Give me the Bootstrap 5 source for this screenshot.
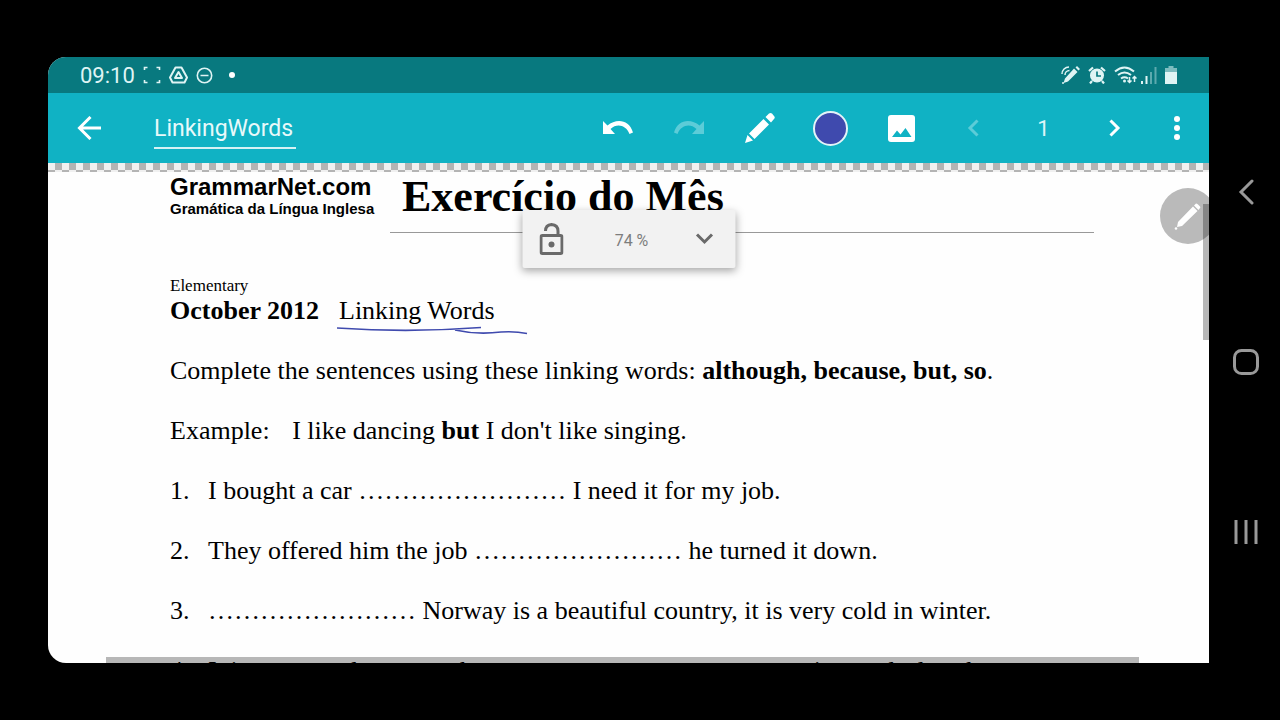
<!DOCTYPE html>
<html lang="pt">
<head>
<meta charset="utf-8">
<meta name="viewport" content="width=device-width, initial-scale=1">
<title>LinkingWords</title>
<link href="https://cdn.jsdelivr.net/npm/bootstrap@5.3.0/dist/css/bootstrap.min.css" rel="stylesheet">
<style>
  body { background: #000; font-family: Roboto, sans-serif; }
  svg { display: block; }
  .device { padding: 57px 0 57px 48px; }
  .screen { border-radius: 18px 0 0 18px; background: #fefefe; min-width: 0; }
  .status { background: #08797f; color: #dff4f4; height: 36px; padding: 0 32px; }
  .clock { font-size: 22px; line-height: 36px; padding-top: 1px; }
  .toolbar { background: #10b2c4; height: 70px; padding: 0 5px 0 5px; }
  .tool { width: 71px; height: 70px; padding: 0; border: 0; background: none; color: #fff; display: flex; align-items: center; justify-content: center; flex: none; }
  .tool:disabled { color: #5cccd8; }
  .tool-back { width: 72px; }
  .tool-menu { width: 54px; }
  .doc-name { width: 142px; margin-left: 29px; padding: 2px 0 0; height: 42px; border: 0; border-bottom: 2px solid #d5f2f5; background: none; color: #e8f9fa; font-size: 23px; outline: 0; border-radius: 0; }
  .page-no { width: 71px; color: #dff6f8; font-size: 22px; text-align: center; }
  .swatch { width: 35px; height: 35px; border-radius: 50%; background: #3f4aae; border: 2px solid #e3f4f8; }
  .checker { height: 9px; flex: none; background: repeating-conic-gradient(#f0f0f0 0 25%, #b4b4b4 0 50%) 7px 0 / 14px 14px; }
  .paper { min-height: 0; font-family: "Liberation Serif", serif; font-size: 26px; line-height: 30px; color: #000; padding: 0 115px 0 122px; }
  .paper p { margin: 0 0 30px; white-space: nowrap; }
  .masthead { height: 61px; }
  .brand { width: 220px; font-family: "Liberation Sans", sans-serif; font-weight: 700; white-space: nowrap; flex: none; }
  .brand-main { font-size: 24px; line-height: 30px; }
  .brand-sub { font-size: 15px; line-height: 14px; }
  .headline { font-size: 44px; line-height: 50px; font-weight: 700; padding-left: 12px; margin: 0; border-bottom: 1px solid #999; white-space: nowrap; }
  .level { font-size: 17px; line-height: 20px; margin-top: 43px; }
  .topic { margin-left: 20px; position: relative; display: inline-block; }
  .ink { position: absolute; left: -2px; top: 29px; }
  .num { display: inline-block; width: 38px; }
  .zoom-panel { top: 153px; width: 213px; height: 58px; background: #f2f2f2; color: #6a6a6a; border-radius: 2px; box-shadow: 0 3px 8px rgba(0,0,0,.35); padding: 0 17px; z-index: 2; }
  .zoom-panel button { padding: 0; border: 0; background: none; color: inherit; }
  .zoom-value { font-size: 16px; color: #7d7d7d; padding: 3px 0 0 4px; }
  .pen-fab { width: 56px; height: 56px; top: 131px; right: -7px; border: 0; padding: 0; border-radius: 50%; background: #bababa; color: #fff; display: flex; align-items: center; justify-content: center; }
  .bar-v { top: 147px; right: 0; width: 6px; height: 136px; background: rgba(0,0,0,.28); z-index: 2; }
  .bar-h { bottom: 0; left: 5%; right: 6%; height: 6px; background: rgba(0,0,0,.28); }
  .rail { width: 71px; flex: none; padding-top: 4px; }
  .rail button { height: 170px; padding: 0 0 0 2px; border: 0; background: none; color: #999; display: flex; align-items: center; justify-content: center; }
</style>
</head>
<body>
<div class="d-flex vh-100 overflow-hidden">
  <div class="device d-flex flex-grow-1 overflow-hidden">
    <main class="screen d-flex flex-column flex-grow-1 position-relative overflow-hidden">
      <div class="status d-flex align-items-center flex-shrink-0">
        <span class="clock">09:10</span>
        <div class="d-flex align-items-center gap-2 ms-2">
          <svg width="18" height="18" viewBox="0 0 18 18" fill="none" stroke="currentColor" stroke-width="1.600"><path d="M1.500 4V1.500h3M13.500 1.500h3V4M16.500 14v2.500h-3M4.500 16.500h-3V14"/></svg>
          <svg width="19" height="18" viewBox="0 0 19 18" fill="none" stroke="currentColor" stroke-width="2" stroke-linejoin="round"><path d="M6.500 1.500h6l5.500 10-2.500 5h-12L1 11.500z"/><path d="M9.500 6l-3.500 6h7z"/></svg>
          <svg width="17" height="17" viewBox="0 0 17 17" fill="none" stroke="currentColor" stroke-width="1.600"><circle cx="8.500" cy="8.500" r="7.200"/><path d="M4.500 8.500h8"/></svg>
          <svg class="ms-2" width="6" height="6"><circle cx="3" cy="3" r="3" fill="#fff"/></svg>
        </div>
        <div class="d-flex align-items-center ms-auto gap-2">
          <svg width="19" height="18" viewBox="0 0 19 18" fill="currentColor"><path d="M13 2.500l3.500 3.500L7 15.500l-4.500 1.500L4 12.500zM14.500 1.500L16 0l3 3-1.500 1.500z"/><circle cx="2" cy="17" r="1"/><path d="M1 8a7 7 0 0 1 7-7M4 9a4.500 4.500 0 0 1 4.500-4.500" fill="none" stroke="currentColor" stroke-width="1.500"/></svg>
          <svg width="18" height="18" viewBox="0 0 18 18"><g fill="none" stroke="currentColor" stroke-width="2.200"><path d="M1 5l4-3.500M17 5l-4-3.500M4 15l-2 2.500M14 15l2 2.500"/></g><circle cx="9" cy="9.500" r="7" fill="currentColor"/><path d="M9 5.500V10h4" fill="none" stroke="#08797f" stroke-width="1.700"/></svg>
          <div class="d-flex align-items-center gap-1">
            <svg width="23" height="18" viewBox="0 0 23 18" fill="none" stroke="currentColor" stroke-width="2"><path d="M1 5.500q9.500-8 19 0M4 9q6.500-5 13 0M7 12.500q3.500-2.500 7 0"/><circle cx="10.500" cy="15" r="1.500" fill="currentColor" stroke="none"/><path d="M15.500 11v5M13.500 14.500l2 2 2-2M20.500 16v-5M18.500 12.500l2-2 2 2" stroke-width="1.500"/></svg>
            <svg width="16" height="17" viewBox="0 0 16 17" fill="currentColor"><path d="M0 14h2v3H0zM4.500 9h2v8h-2z"/><path opacity=".4" d="M9 5h2v12H9zM13.500 0h2v17h-2z"/></svg>
          </div>
          <svg width="12" height="18" viewBox="0 0 12 18" fill="currentColor"><path opacity=".55" d="M3.500 0h5v2H12v4H0V2h3.500z"/><path d="M0 6h12v12H0z"/></svg>
        </div>
      </div>
      <nav class="toolbar d-flex align-items-center flex-shrink-0" aria-label="Editor">
        <button class="tool tool-back" aria-label="Back"><svg width="24" height="24" viewBox="0 0 24 24" fill="none" stroke="currentColor" stroke-width="3"><path d="M24 12H3M13.500 1L2.500 12l11 11"/></svg></button>
        <input class="doc-name" aria-label="Document name" value="LinkingWords">
        <div class="d-flex align-items-center ms-auto">
          <button class="tool" aria-label="Undo"><svg width="32" height="16" viewBox="0 0 32 16"><path fill="currentColor" d="M1 1l4.500 4.500C14-1.500 27-1 31 12.500L27.500 14C24 5 15 3 8.500 9L13 14H1z"/></svg></button>
          <button class="tool" aria-label="Redo" disabled><svg width="32" height="16" viewBox="0 0 32 16"><path fill="currentColor" d="M31 1l-4.500 4.500C18-1.500 5-1 1 12.500L4.500 14C8 5 17 3 23.500 9L19 14H31z"/></svg></button>
          <button class="tool" aria-label="Pencil"><svg width="32" height="32" viewBox="0 0 32 32" fill="currentColor"><path d="M1 31l2.500-8 5.500 5.500zM5 21.500L19.500 7l5.500 5.500L10.500 27zM21.500 5L25 1.500q1.500-1 3 0L30 4q1.500 1.500 0 3l-3 3.500z"/></svg></button>
          <button class="tool" aria-label="Colour"><span class="swatch"></span></button>
          <button class="tool" aria-label="Insert image"><svg width="27" height="27" viewBox="0 0 27 27"><rect width="27" height="27" rx="3" fill="currentColor"/><path fill="#10b2c4" d="M4 22l5-6.500 3.500 4 5-6.500L23.500 22z"/></svg></button>
          <button class="tool" aria-label="Previous page" disabled><svg width="12" height="18" viewBox="0 0 12 18" fill="none" stroke="currentColor" stroke-width="3"><path d="M10.500 1.500L3 9l7.500 7.500"/></svg></button>
          <span class="page-no">1</span>
          <button class="tool" aria-label="Next page"><svg width="12" height="18" viewBox="0 0 12 18" fill="none" stroke="currentColor" stroke-width="3"><path d="M1.500 1.500L9 9l-7.500 7.500"/></svg></button>
          <button class="tool tool-menu" aria-label="More"><svg width="6" height="24" viewBox="0 0 6 24" fill="currentColor"><circle cx="3" cy="3" r="3"/><circle cx="3" cy="12" r="3"/><circle cx="3" cy="21" r="3"/></svg></button>
        </div>
      </nav>
      <div class="checker"></div>
      <article class="paper flex-grow-1 overflow-hidden">
        <header class="masthead d-flex">
          <div class="brand">
            <div class="brand-main">GrammarNet.com</div>
            <div class="brand-sub">Gramática da Língua Inglesa</div>
          </div>
          <h1 class="headline flex-grow-1">Exercício do Mês</h1>
        </header>
        <div class="level">Elementary</div>
        <p><b>October 2012</b><span class="topic">Linking Words<svg class="ink" width="192" height="10" viewBox="0 0 192 10" fill="none" stroke="#3f4aae" stroke-width="1.600"><path d="M0 3Q72 8 144 2.500M118 5Q140 10 164 7Q178 6 190 8.500"/></svg></span></p>
        <p>Complete the sentences using these linking words: <b>although, because, but, so</b>.</p>
        <p>Example: <span class="ms-3">I like dancing <b>but</b> I don't like singing.</span></p>
        <p><span class="num">1.</span>I bought a car …………………… I need it for my job.</p>
        <p><span class="num">2.</span>They offered him the job …………………… he turned it down.</p>
        <p><span class="num">3.</span>…………………… Norway is a beautiful country, it is very cold in winter.</p>
        <p><span class="num">4.</span>It is summer down near here …………………… we won in our deal each</p>
      </article>
      <div class="bar-h position-absolute"></div>
      <div class="bar-v position-absolute"></div>
      <button class="pen-fab position-absolute" aria-label="Pen"><svg width="28" height="28" viewBox="0 0 28 28" fill="currentColor"><path d="M4 20L19 4.500l4.500 4.500L8 24l-5 1zM20 3.500L22 1.500q1 0 2 1l2 2q.8 1 0 1.500L24.500 8z"/><circle cx="2" cy="26.500" r="1.300"/></svg></button>
      <div class="zoom-panel position-absolute start-50 translate-middle-x d-flex align-items-center justify-content-between">
        <button aria-label="Lock zoom"><svg width="24" height="32" viewBox="0 0 24 32" fill="none" stroke="currentColor" stroke-width="3"><rect x="1.500" y="12.500" width="21" height="18" rx="1.500"/><path d="M6 8q0-6 6-6.500 6.500.5 6.500 6.500v4"/><circle cx="12" cy="21.500" r="3" fill="currentColor" stroke="none"/></svg></button>
        <span class="zoom-value">74 %</span>
        <button class="me-1" aria-label="Zoom options"><svg width="18" height="12" viewBox="0 0 18 12" fill="none" stroke="currentColor" stroke-width="3"><path d="M1.500 1.500L9 9l7.500-7.500"/></svg></button>
      </div>
    </main>
  </div>
  <nav class="rail d-flex flex-column justify-content-center" aria-label="System">
    <button aria-label="Back"><svg width="16" height="26" viewBox="0 0 16 26" fill="none" stroke="currentColor" stroke-width="3" stroke-linecap="round"><path d="M14 2L3 13l11 11"/></svg></button>
    <button aria-label="Home"><svg width="26" height="26" viewBox="0 0 26 26" fill="none" stroke="currentColor" stroke-width="3"><rect x="1.500" y="1.500" width="23" height="23" rx="7"/></svg></button>
    <button aria-label="Recent apps"><svg width="24" height="24" viewBox="0 0 24 24" stroke="currentColor" stroke-width="3"><path d="M2 0v24M12 0v24M22 0v24"/></svg></button>
  </nav>
</div>
<script src="https://cdn.jsdelivr.net/npm/bootstrap@5.3.0/dist/js/bootstrap.bundle.min.js"></script>
</body>
</html>
